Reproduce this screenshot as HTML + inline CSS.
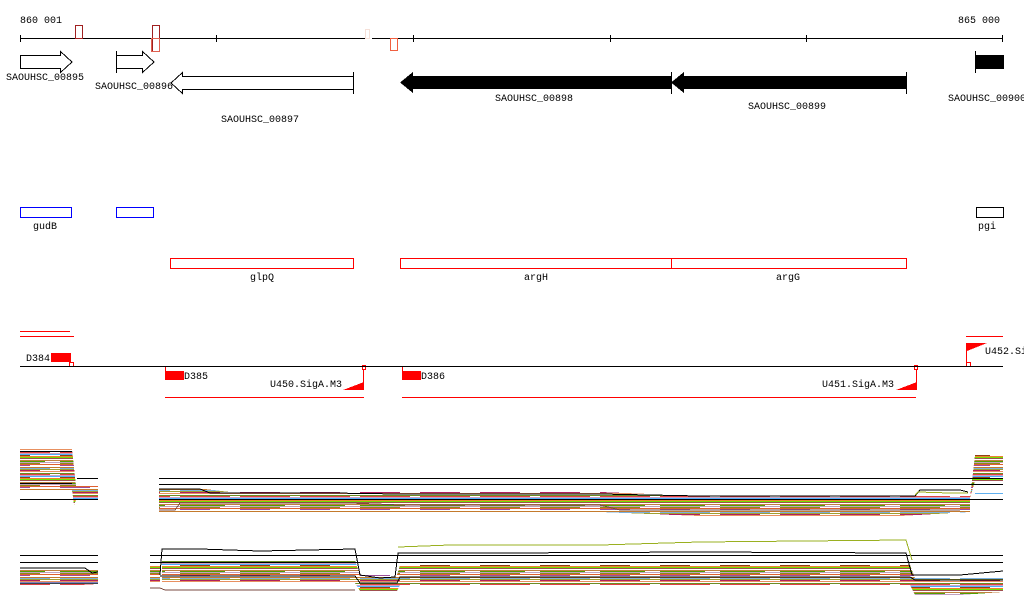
<!DOCTYPE html>
<html><head><meta charset="utf-8"><style>
html,body{margin:0;padding:0;background:#fff;width:1024px;height:611px;overflow:hidden}
svg text{font-family:"Liberation Mono","DejaVu Sans Mono",monospace;font-size:10px;fill:#000}
</style></head><body>
<svg width="1024" height="611" viewBox="0 0 1024 611" xmlns="http://www.w3.org/2000/svg" shape-rendering="crispEdges">
<defs>
<pattern id="st" x="0" y="0" width="60" height="22" patternUnits="userSpaceOnUse">
<rect width="60" height="22" fill="#ffffff"/>
<rect y="0" width="60" height="1" fill="#c0a0c0"/>
<rect y="1" width="40" height="1" fill="#8b8b1a"/>
<rect y="2" width="60" height="1" fill="#e06030"/>
<rect y="3" width="30" height="1" fill="#9b4f9b"/>
<rect y="5" width="60" height="1" fill="#c47a2c"/>
<rect y="6" width="50" height="1" fill="#7ab0e0"/>
<rect y="7" width="60" height="1" fill="#a0a030"/>
<rect y="8" width="40" height="1" fill="#b02060"/>
<rect y="9" width="60" height="1" fill="#e89060"/>
<rect y="11" width="60" height="1" fill="#6b8e23"/>
<rect y="12" width="50" height="1" fill="#e04040"/>
<rect y="13" width="60" height="1" fill="#d0a0c0"/>
<rect y="14" width="60" height="1" fill="#4db0ff"/>
<rect y="15" width="30" height="1" fill="#8b4513"/>
<rect y="16" width="60" height="1" fill="#f08030"/>
<rect y="17" width="60" height="1" fill="#70e000"/>
<rect y="18" width="60" height="1" fill="#a05050"/>
<rect y="20" width="60" height="1" fill="#c08040"/>
<rect y="21" width="45" height="1" fill="#50a000"/>
</pattern>
</defs>
<text x="20" y="23">860 001</text>
<text x="958" y="23">865 000</text>
<g stroke="#000" stroke-width="1">
<line x1="20" y1="38.5" x2="365" y2="38.5"/><line x1="372" y1="38.5" x2="1003" y2="38.5"/>
<line x1="20.5" y1="35" x2="20.5" y2="42"/><line x1="216.5" y1="35" x2="216.5" y2="42"/>
<line x1="413.5" y1="35" x2="413.5" y2="42"/><line x1="610.5" y1="35" x2="610.5" y2="42"/>
<line x1="806.5" y1="35" x2="806.5" y2="42"/><line x1="1002.5" y1="35" x2="1002.5" y2="42"/>
</g>
<rect x="75.5" y="25.5" width="7" height="13" fill="none" stroke="#a02020"/>
<rect x="152.5" y="25.5" width="7" height="26" fill="none" stroke="#a02020"/>
<rect x="151.5" y="38.5" width="8" height="13" fill="none" stroke="#e06050"/>
<rect x="365.5" y="29.5" width="4" height="9" fill="none" stroke="#f5e0d8"/>
<rect x="390.5" y="38.5" width="7" height="12" fill="none" stroke="#f06040"/>
<g stroke="#000" fill="#fff">
<path d="M20.5 55.5 H60.5 V51.5 L72 62 L60.5 72.5 V68.5 H20.5 Z"/>
<path d="M116.5 55.5 H142.5 V51.5 L154 62 L142.5 72.5 V68.5 H116.5"/>
<line x1="116.5" y1="51" x2="116.5" y2="73"/>
<path d="M353.5 76.5 H182.5 V72.5 L171 83 L182.5 93.5 V89.5 H353.5"/>
<line x1="353.5" y1="72" x2="353.5" y2="94"/>
</g>
<path d="M671 76 H413 V72 L400 82.5 L413 93 V89 H671 Z" fill="#000"/>
<path d="M906 76 H684 V72 L671 82.5 L684 93 V89 H906 Z" fill="#000"/>
<line x1="671.5" y1="72" x2="671.5" y2="94" stroke="#000"/>
<line x1="906.5" y1="72" x2="906.5" y2="94" stroke="#000"/>
<rect x="976" y="55" width="28" height="14" fill="#000"/>
<line x1="975.5" y1="51" x2="975.5" y2="73" stroke="#000"/>
<text x="6" y="80">SAOUHSC_00895</text>
<text x="95" y="89">SAOUHSC_00896</text>
<text x="221" y="122">SAOUHSC_00897</text>
<text x="495" y="101">SAOUHSC_00898</text>
<text x="748" y="109">SAOUHSC_00899</text>
<text x="948" y="101">SAOUHSC_00900</text>
<rect x="20.5" y="207.5" width="51" height="10" fill="none" stroke="#00f"/>
<rect x="116.5" y="207.5" width="37" height="10" fill="none" stroke="#00f"/>
<rect x="976.5" y="207.5" width="27" height="10" fill="none" stroke="#000"/>
<text x="33" y="229">gudB</text>
<text x="978" y="229">pgi</text>
<g fill="none" stroke="#f00">
<rect x="170.5" y="258.5" width="183" height="10"/>
<rect x="400.5" y="258.5" width="271" height="10"/>
<rect x="671.5" y="258.5" width="235" height="10"/>
</g>
<text x="250" y="280">glpQ</text>
<text x="524" y="280">argH</text>
<text x="776" y="280">argG</text>
<g stroke="#f00" fill="none">
<line x1="20" y1="331.5" x2="70" y2="331.5"/>
<line x1="20" y1="336.5" x2="74" y2="336.5"/>
<line x1="966" y1="336.5" x2="1003" y2="336.5"/>
<line x1="165" y1="397.5" x2="364" y2="397.5"/>
<line x1="402" y1="397.5" x2="916" y2="397.5"/>
<rect x="69.5" y="362.5" width="4" height="4"/>
<rect x="362.5" y="365.5" width="3" height="4"/>
<rect x="914.5" y="365.5" width="3" height="4"/>
<rect x="966.5" y="362.5" width="4" height="4"/>
<line x1="165.5" y1="366" x2="165.5" y2="373"/>
<line x1="402.5" y1="366" x2="402.5" y2="373"/>
<line x1="363.5" y1="369" x2="363.5" y2="390"/>
<line x1="916.5" y1="369" x2="916.5" y2="390"/>
<line x1="966.5" y1="343" x2="966.5" y2="363"/>
</g>
<line x1="20" y1="366.5" x2="1003" y2="366.5" stroke="#000"/>
<g fill="#f00">
<rect x="51" y="353" width="20" height="9"/>
<rect x="165" y="371" width="19" height="9"/>
<rect x="402" y="371" width="19" height="9"/>
<path d="M343 390 L364 382 V390 Z"/>
<path d="M896 390 L917 382 V390 Z"/>
<path d="M967 343 H987 L967 351 Z"/>
</g>
<text x="26" y="361">D384</text>
<text x="184" y="379">D385</text>
<text x="421" y="379">D386</text>
<text x="270" y="387">U450.SigA.M3</text>
<text x="822" y="387">U451.SigA.M3</text>
<text x="985" y="354">U452.SigA</text>
<path d="M20 449 H72 L76 486 H98 V500 H76 L74 505 L72 490 H20 Z" fill="url(#st)"/>
<path d="M159 489 H205 L230 492 H600 L700 496 H970 V512 L900 516 H700 L600 512 H159 Z" fill="url(#st)"/>
<path d="M975 455 H1003 V481 H975 L970 498 Z" fill="url(#st)"/>
<g stroke="#000" fill="none" stroke-width="1">
<line x1="20" y1="451.5" x2="72" y2="451.5"/>
<line x1="20" y1="483.5" x2="72" y2="483.5"/>
<line x1="77" y1="478.5" x2="98" y2="478.5"/>
<line x1="20" y1="499.5" x2="98" y2="499.5"/>
<line x1="159" y1="478.5" x2="1003" y2="478.5"/>
<line x1="159" y1="484.5" x2="1003" y2="484.5"/>
<line x1="159" y1="499.5" x2="1003" y2="499.5"/>
<polyline points="159,489 200,489 210,493 330,493 400,494 600,494 700,496 915,496 920,490 960,490 968,492"/>
</g>
<polyline points="159,510 175,510 180,503 350,503 400,505 600,505 620,510 960,510" stroke="#7a4a40" fill="none"/>
<polyline points="915,495 918,492 950,493 968,493" stroke="#a0b020" fill="none"/>
<line x1="975" y1="493.5" x2="1003" y2="493.5" stroke="#60b0f0"/>
<path d="M20 569 H98 V584 L80 585 H20 Z" fill="url(#st)"/>
<path d="M150 565 H160 V583 H150 Z" fill="url(#st)"/>
<path d="M162 560 H355 L360 575 H397 L400 565 H910 L915 578 H1003 V592 L960 595 H915 L910 585 H400 L397 591 H360 L355 583 H162 Z" fill="url(#st)"/>
<g stroke="#000" fill="none">
<line x1="20" y1="555.5" x2="98" y2="555.5"/>
<line x1="20" y1="562.5" x2="98" y2="562.5"/>
<line x1="150" y1="555.5" x2="1003" y2="555.5"/>
<line x1="150" y1="562.5" x2="1003" y2="562.5"/>
<polyline points="20,568 85,568 92,573 98,572"/>
<polyline points="160,575 162,549 200,549 260,551 355,549 360,575 380,578 395,577 398,553 500,553 700,552 906,553 912,575 960,575 1003,571"/>
<polyline points="160,576 355,576 360,583 397,583 400,577 910,577 915,580 1003,580"/>
</g>
<polyline points="398,547 450,545 600,545 700,542 906,540 912,560" stroke="#9ab020" fill="none"/>
<polyline points="150,588 160,588 165,590 355,590" stroke="#7a4a40" fill="none"/>
<polyline points="20,583 98,583" stroke="#000080" fill="none"/>
</svg>
</body></html>
